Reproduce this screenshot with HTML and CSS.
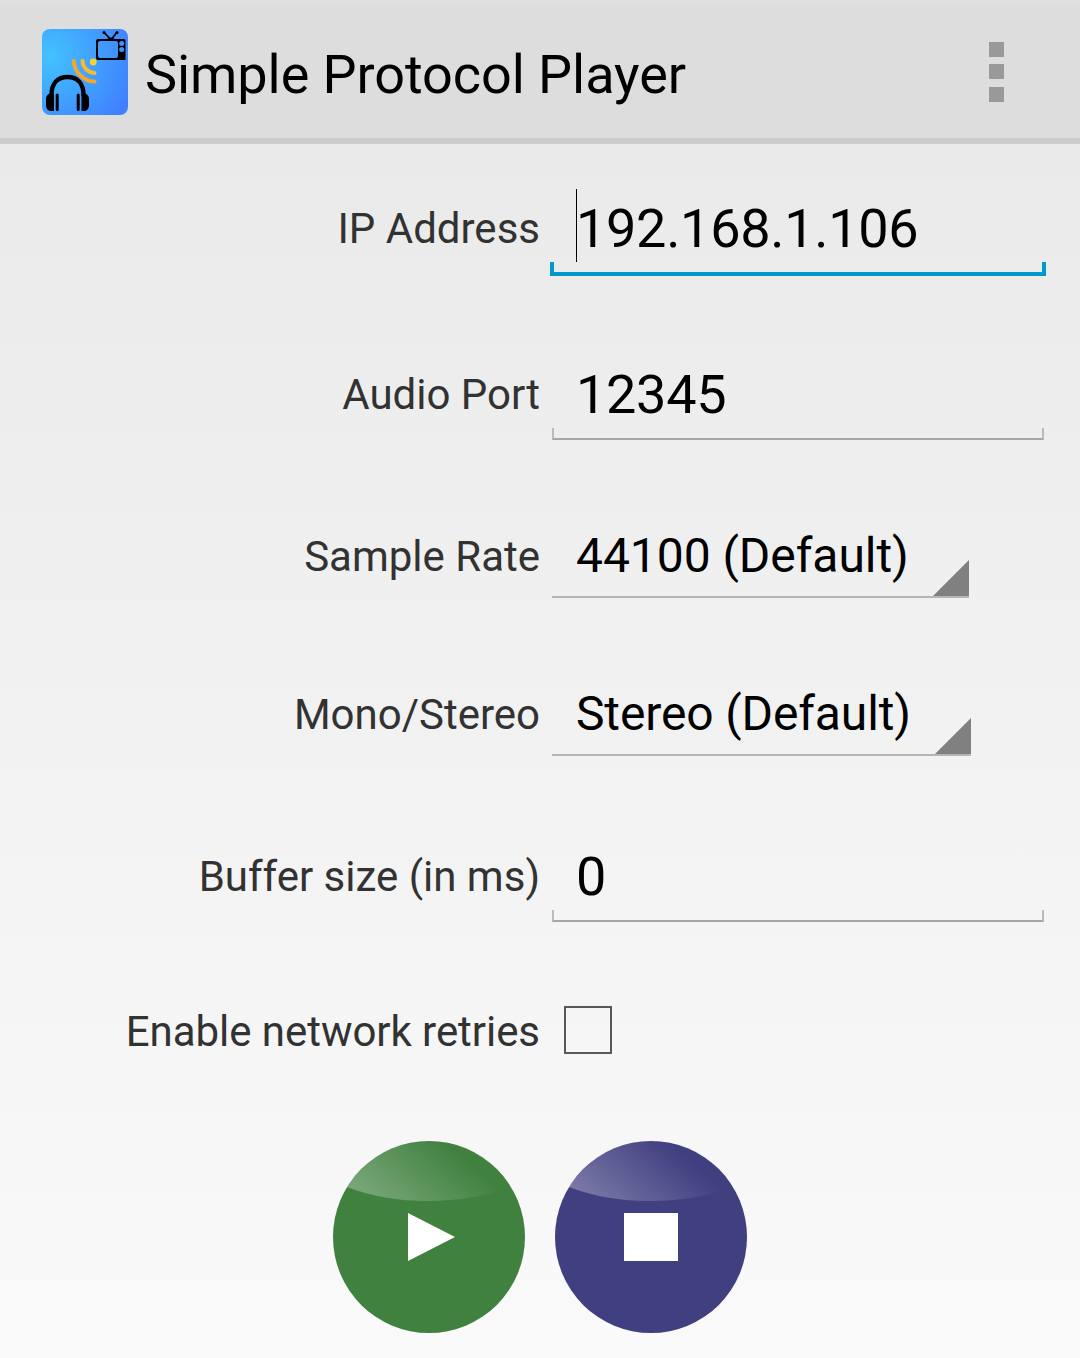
FILE: index.html
```html
<!DOCTYPE html>
<html lang="en">
<head>
<meta charset="utf-8">
<title>Simple Protocol Player</title>
<link rel="stylesheet" href="styles.css">
</head>
<body>
<header class="action-bar">
  <svg class="app-icon" viewBox="0 0 86 86" aria-hidden="true">
    <defs>
      <radialGradient id="sky" gradientUnits="userSpaceOnUse" cx="8" cy="28" r="88">
        <stop offset="0" stop-color="#42c2ff"/>
        <stop offset="1" stop-color="#4080ff"/>
      </radialGradient>
    </defs>
    <rect width="86" height="86" rx="8" fill="url(#sky)"/>
    <path d="M62 3.300l7 7.500L75 3.300" fill="none" stroke="#000" stroke-width="1.700"/>
    <circle cx="62" cy="3.500" r="1.500"/><circle cx="75" cy="3.500" r="1.500"/>
    <path fill-rule="evenodd" d="M65 10q4-3 8 0h9a1.500 1.500 0 0 1 1.500 1.500V31H56a2 2 0 0 1-2-2V12a2 2 0 0 1 2-2zM58 12a2 2 0 0 0-2 2V27a2 2 0 0 0 2 2H74a2 2 0 0 0 2-2V14a2 2 0 0 0-2-2z"/>
    <circle cx="79.700" cy="14.600" r="2.500" fill="#4390ff"/><circle cx="79.700" cy="20.600" r="2.500" fill="#4390ff"/>
    <circle cx="51.200" cy="33" r="3.400" fill="#fcd32c"/>
    <path d="M40.500 32c.3 6 5 11.500 12 12" fill="none" stroke="#fbbb2b" stroke-width="4" stroke-linecap="round"/>
    <path d="M31.800 32c.3 10.500 9.500 20.300 20.700 20.500" fill="none" stroke="#f9a52b" stroke-width="4" stroke-linecap="round"/>
    <path d="M9.500 67C9 54 16 48 25.500 48S42 54 41.500 67" fill="none" stroke="#000" stroke-width="4.400"/>
    <path d="M7.500 64.500H12V82H8q-4-1-4-6V70q0-4 3.500-5.500zM43.500 64.500H39.500V82H43q4-1 4-6V70q0-4-3.500-5.500z"/>
    <path d="M15.200 66V80.500M36.200 66V80.500" stroke="#000" stroke-width="3" stroke-linecap="round"/>
  </svg>
  <h1 class="title">Simple Protocol Player</h1>
  <div class="overflow"><i></i><i></i><i></i></div>
</header>
<main class="form">
  <div class="row row-ip">
    <span class="label">IP Address</span>
    <div class="edit focused"><span class="cursor"></span>192.168.1.106</div>
  </div>
  <div class="row row-port">
    <span class="label">Audio Port</span>
    <div class="edit">12345</div>
  </div>
  <div class="row row-spinner">
    <span class="label">Sample Rate</span>
    <div class="spinner rate">44100 (Default)</div>
  </div>
  <div class="row row-spinner">
    <span class="label">Mono/Stereo</span>
    <div class="spinner channels">Stereo (Default)</div>
  </div>
  <div class="row row-buffer">
    <span class="label">Buffer size (in ms)</span>
    <div class="edit">0</div>
  </div>
  <div class="row row-check">
    <span class="label">Enable network retries</span>
    <div class="checkbox"></div>
  </div>
  <div class="controls">
    <svg class="control" viewBox="0 0 192 192" role="img" aria-label="Play">
      <defs>
        <linearGradient id="gloss" gradientUnits="userSpaceOnUse" x1="40" y1="82" x2="112" y2="0">
          <stop offset="0" stop-color="#fff" stop-opacity=".34"/>
          <stop offset="1" stop-color="#fff" stop-opacity="0"/>
        </linearGradient>
      </defs>
      <circle cx="96" cy="96" r="96" fill="#408140"/>
      <path d="M14.050 46A96 96 0 0 1 177.950 46Q140 60 95 60T14.050 46z" fill="url(#gloss)"/>
      <path d="M75 72L122 96 75 120z" fill="#fff"/>
    </svg>
    <svg class="control" viewBox="0 0 192 192" role="img" aria-label="Stop">
      <circle cx="96" cy="96" r="96" fill="#403f80"/>
      <path d="M14.050 46A96 96 0 0 1 177.950 46Q140 60 95 60T14.050 46z" fill="url(#gloss)"/>
      <rect x="69" y="72" width="54" height="48" fill="#fff"/>
    </svg>
  </div>
</main>
</body>
</html>
```
FILE: styles.css
```css
*, *::before, *::after { box-sizing: border-box; }
body {
  margin: 0;
  height: 1358px;
  overflow: hidden;
  background: linear-gradient(#e8e8e8, #fafafa);
  font-family: Roboto, "Liberation Sans", sans-serif;
  color: #000;
}
.action-bar {
  display: flex;
  align-items: flex-start;
  height: 144px;
  padding: 26px 76px 0 42px;
  background: #ddd;
  border-top: 3px solid #e0e0e0;
  border-bottom: 6px solid #ccc;
}
.app-icon { width: 86px; height: 86px; }
.title {
  flex: 1;
  margin: 14px 0 0 17px;
  font-size: 54px;
  line-height: 64px;
  font-weight: 400;
  letter-spacing: -0.07px;
}
.overflow { display: grid; grid-template-rows: 22px 23px 15px; margin-top: 13px; }
.overflow i { width: 15px; height: 15px; background: #999; }
.row { display: grid; grid-template-columns: 540px 1fr; align-items: start; }
.label {
  padding-top: 18px;
  text-align: right;
  font-size: 42px;
  line-height: 50px;
  color: #323232;
}
.row-ip { height: 166px; padding-top: 42px; }
.row-port { height: 164px; padding-top: 42px; }
.row-spinner { height: 158px; padding-top: 46px; }
.row-spinner .label { padding-top: 12px; }
.row-buffer { height: 160px; padding-top: 44px; }
.row-check { height: 166px; padding-top: 56px; }
.row-check .label { padding-top: 1px; letter-spacing: -0.05px; }
.edit {
  position: relative;
  width: 492px;
  height: 88px;
  margin-left: 12px;
  padding: 11px 0 0 24px;
  font-size: 54px;
  line-height: 64px;
  letter-spacing: -0.3px;
}
.edit::after {
  content: "";
  position: absolute;
  inset: auto 0 0;
  height: 12px;
  border: 2px solid #bbb;
  border-top: 0;
  border-bottom-color: #a6a6a6;
}
.edit.focused { height: 90px; }
.edit.focused::after {
  inset: auto -2px 0;
  height: 14px;
  border: 4px solid #0099cc;
  border-top: 0;
}
.cursor { position: absolute; left: 24px; top: 3px; width: 1px; height: 73px; background: #000; }
.spinner {
  position: relative;
  height: 78px;
  margin-left: 12px;
  padding: 8px 0 0 24px;
  font-size: 48px;
  line-height: 56px;
  border-bottom: 2px solid #b5b5b5;
}
.rate { width: 417px; letter-spacing: -0.05px; }
.channels { width: 419px; letter-spacing: -0.13px; }
.spinner::after {
  content: "";
  position: absolute;
  right: 0;
  bottom: 0;
  width: 36px;
  height: 36px;
  background: #808080;
  clip-path: polygon(100% 0, 100% 100%, 0 100%);
}
.checkbox { width: 48px; height: 48px; margin-left: 24px; border: 2px solid #585858; }
.controls { display: flex; justify-content: center; gap: 30px; padding-top: 25px; }
.control { width: 192px; height: 192px; }
```
